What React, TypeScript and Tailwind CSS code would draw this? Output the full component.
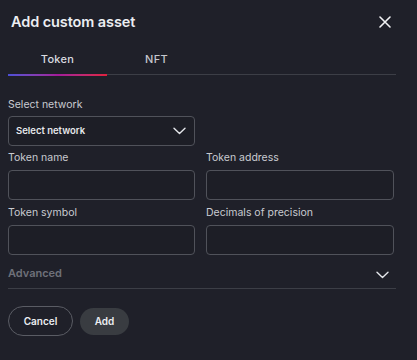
import React from "react";

const Chevron = ({ className = "" }: { className?: string }) => (
  <svg className={className} width="13" height="8" viewBox="0 0 13 8" fill="none">
    <path d="M1 1.2 L6.5 6.4 L12 1.2" stroke="#e5e7eb" strokeWidth="1.4" strokeLinecap="round" strokeLinejoin="round" />
  </svg>
);

const Field = ({ label }: { label: string }) => (
  <div className="flex flex-col">
    <div className="text-[10.5px] leading-[14px] text-[#c9cbd1] h-[14px] mb-[5px]">{label}</div>
    <div className="h-[30px] rounded-[4px] border border-[#50525a] bg-[#1d1e26]" />
  </div>
);

export default function App() {
  return (
    <div
      className="w-[417px] h-[360px] bg-[#1f2029] flex overflow-hidden"
      style={{ fontFamily: "Inter, 'Noto Sans', sans-serif" }}
    >
      <div className="w-[410px] flex flex-col pl-[8px] pr-[14px]">
        <div className="flex items-center justify-between h-[42px] pl-[3px] pr-[5px] pt-[1px]">
          <div className="text-[14.5px] font-semibold text-[#eceef2] tracking-[-0.1px]">Add custom asset</div>
          <svg width="12" height="12" viewBox="0 0 12 12">
            <path d="M1 1 L11 11 M11 1 L1 11" stroke="#f1f2f4" strokeWidth="1.6" strokeLinecap="round" />
          </svg>
        </div>
        <div className="flex flex-col mt-[2px]">
          <div className="flex h-[30px] items-center">
            <div className="w-[99px] text-center text-[11px] font-medium text-[#d9dbe0] tracking-[0.3px]">Token</div>
            <div className="w-[99px] text-center text-[11px] font-medium text-[#c5c7cd] tracking-[0.3px]">NFT</div>
          </div>
          <div className="h-[2px] flex">
            <div className="w-[99px] h-[2px] bg-gradient-to-r from-[#4b4fd6] via-[#a21a9a] to-[#e0203c]" />
            <div className="flex-1 h-[1px] bg-[#3c3e46]" />
          </div>
        </div>
        <div className="mt-[22px] text-[10.5px] leading-[14px] text-[#c9cbd1] h-[14px]">Select network</div>
        <div className="mt-[4px] w-[187px] h-[30px] rounded-[4px] border border-[#50525a] bg-[#1d1e26] flex items-center justify-between pl-[7px] pr-[8px]">
          <span className="text-[9.5px] font-semibold text-[#e6e7eb]">Select network</span>
          <Chevron />
        </div>
        <div className="grid grid-cols-[187px_188px] gap-x-[11px] mt-[5px]">
          <Field label="Token name" />
          <Field label="Token address" />
        </div>
        <div className="grid grid-cols-[187px_188px] gap-x-[11px] mt-[6px]">
          <Field label="Token symbol" />
          <Field label="Decimals of precision" />
        </div>
        <div className="mt-[7px] flex items-center justify-between pr-[7px] h-[22px]">
          <span className="text-[11px] font-semibold text-[#6e7079]">Advanced</span>
          <Chevron className="mt-[4px]" />
        </div>
        <div className="mt-[4px] h-[1px] bg-[#3c3e46]" />
        <div className="mt-[17px] flex items-center gap-[7px]">
          <button className="w-[65px] h-[30px] rounded-full border border-[#5a5c64] text-[10px] font-semibold text-[#eceef2]">
            Cancel
          </button>
          <button className="w-[49px] h-[27px] rounded-full bg-[#393c41] text-[10px] font-semibold text-[#eceef2]">
            Add
          </button>
        </div>
      </div>
      <div className="flex-1 bg-[#22232b]" />
    </div>
  );
}
